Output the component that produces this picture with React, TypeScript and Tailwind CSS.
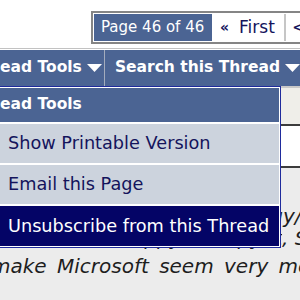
import React from "react";

const navy = "text-[#14145c]";

function Arrow() {
  return (
    <svg width="15" height="8" viewBox="0 0 15 8" className="shrink-0">
      <polygon points="0,0 15,0 7.5,8" fill="#ffffff" />
    </svg>
  );
}

export default function App() {
  return (
    <div className="relative h-[300px] w-[300px] overflow-hidden bg-[#ececec] font-['DejaVu_Sans',sans-serif]">
      {/* pagination */}
      <div className="h-[48px] bg-white pl-[91px] pt-[11px]">
        <div className="flex h-[33px] w-max border-2 border-[#858585] bg-white p-px">
          <div className="flex w-[118px] items-center bg-[#4b6493] pl-[7px] text-[15px] text-white">Page 46 of 46</div>
          <div className={`flex w-[72px] items-center pl-[8px] text-[17px] ${navy}`}>
            <span className="mr-[10px] text-[14px] font-bold">«</span>First
          </div>
          <div className="w-[2px] bg-[#c6c6c6]" />
          <div className={`flex items-center pl-[6px] pr-4 text-[17px] ${navy}`}>&lt;</div>
        </div>
      </div>
      <div className="h-px bg-[#c2c2c2]" />
      <div className="h-px bg-white" />

      {/* navbar */}
      <div className="flex h-[36px] bg-[#4b6493] text-[15.5px] font-bold text-white">
        <div className="flex w-[115px] items-center gap-[5px]">
          <span>ead Tools</span>
          <Arrow />
        </div>
        <div className="w-px bg-[#a3acbd]" />
        <div className="flex items-center gap-[5px] whitespace-nowrap pl-[10px]">
          <span>Search this Thread</span>
          <Arrow />
        </div>
      </div>

      {/* page content behind the menu */}
      <div className="h-[2px] bg-[#c8c8c8]" />
      <div className="h-[36px] bg-[#efeee9]" />
      <div className="h-[2px] bg-[#3c3c3c]" />
      <div className="h-[40px] bg-white" />
      <div className="h-[2px] bg-[#3c3c3c]" />
      <div className="whitespace-nowrap pt-[37px] text-[20px] italic leading-[22px] text-[#1e1e1e]">
        <div className="flex">
          <span className="w-[283px] shrink-0 overflow-hidden text-right">it isn't their strateg</span>
          <span>y/or plan</span>
        </div>
        <div className="flex">
          <span className="w-[282px] shrink-0 overflow-hidden text-right">happy to copy it</span>
          <span>, Steve</span>
        </div>
        <div className="-ml-[9px] mt-[6px] [word-spacing:4px]">make Microsoft seem very more</div>
      </div>

      {/* thread tools menu */}
      <div className="absolute left-[-2px] top-[86px] w-[283px] border border-[#1f2b9c]">
        <div className="flex flex-col gap-[2px] bg-white p-px">
          <div className="flex h-[34px] items-center bg-[#4b6493] text-[15.5px] font-bold text-white">ead Tools</div>
          <div className={`flex h-[39px] items-center bg-[#ccd3dd] pl-[8px] text-[17.7px] ${navy}`}>Show Printable Version</div>
          <div className={`flex h-[39px] items-center bg-[#ccd3dd] pl-[8px] text-[17.7px] ${navy}`}>Email this Page</div>
          <div className="flex h-[40px] items-center bg-[#040466] pl-[8px] text-[17.7px] text-white">Unsubscribe from this Thread</div>
        </div>
      </div>
    </div>
  );
}
